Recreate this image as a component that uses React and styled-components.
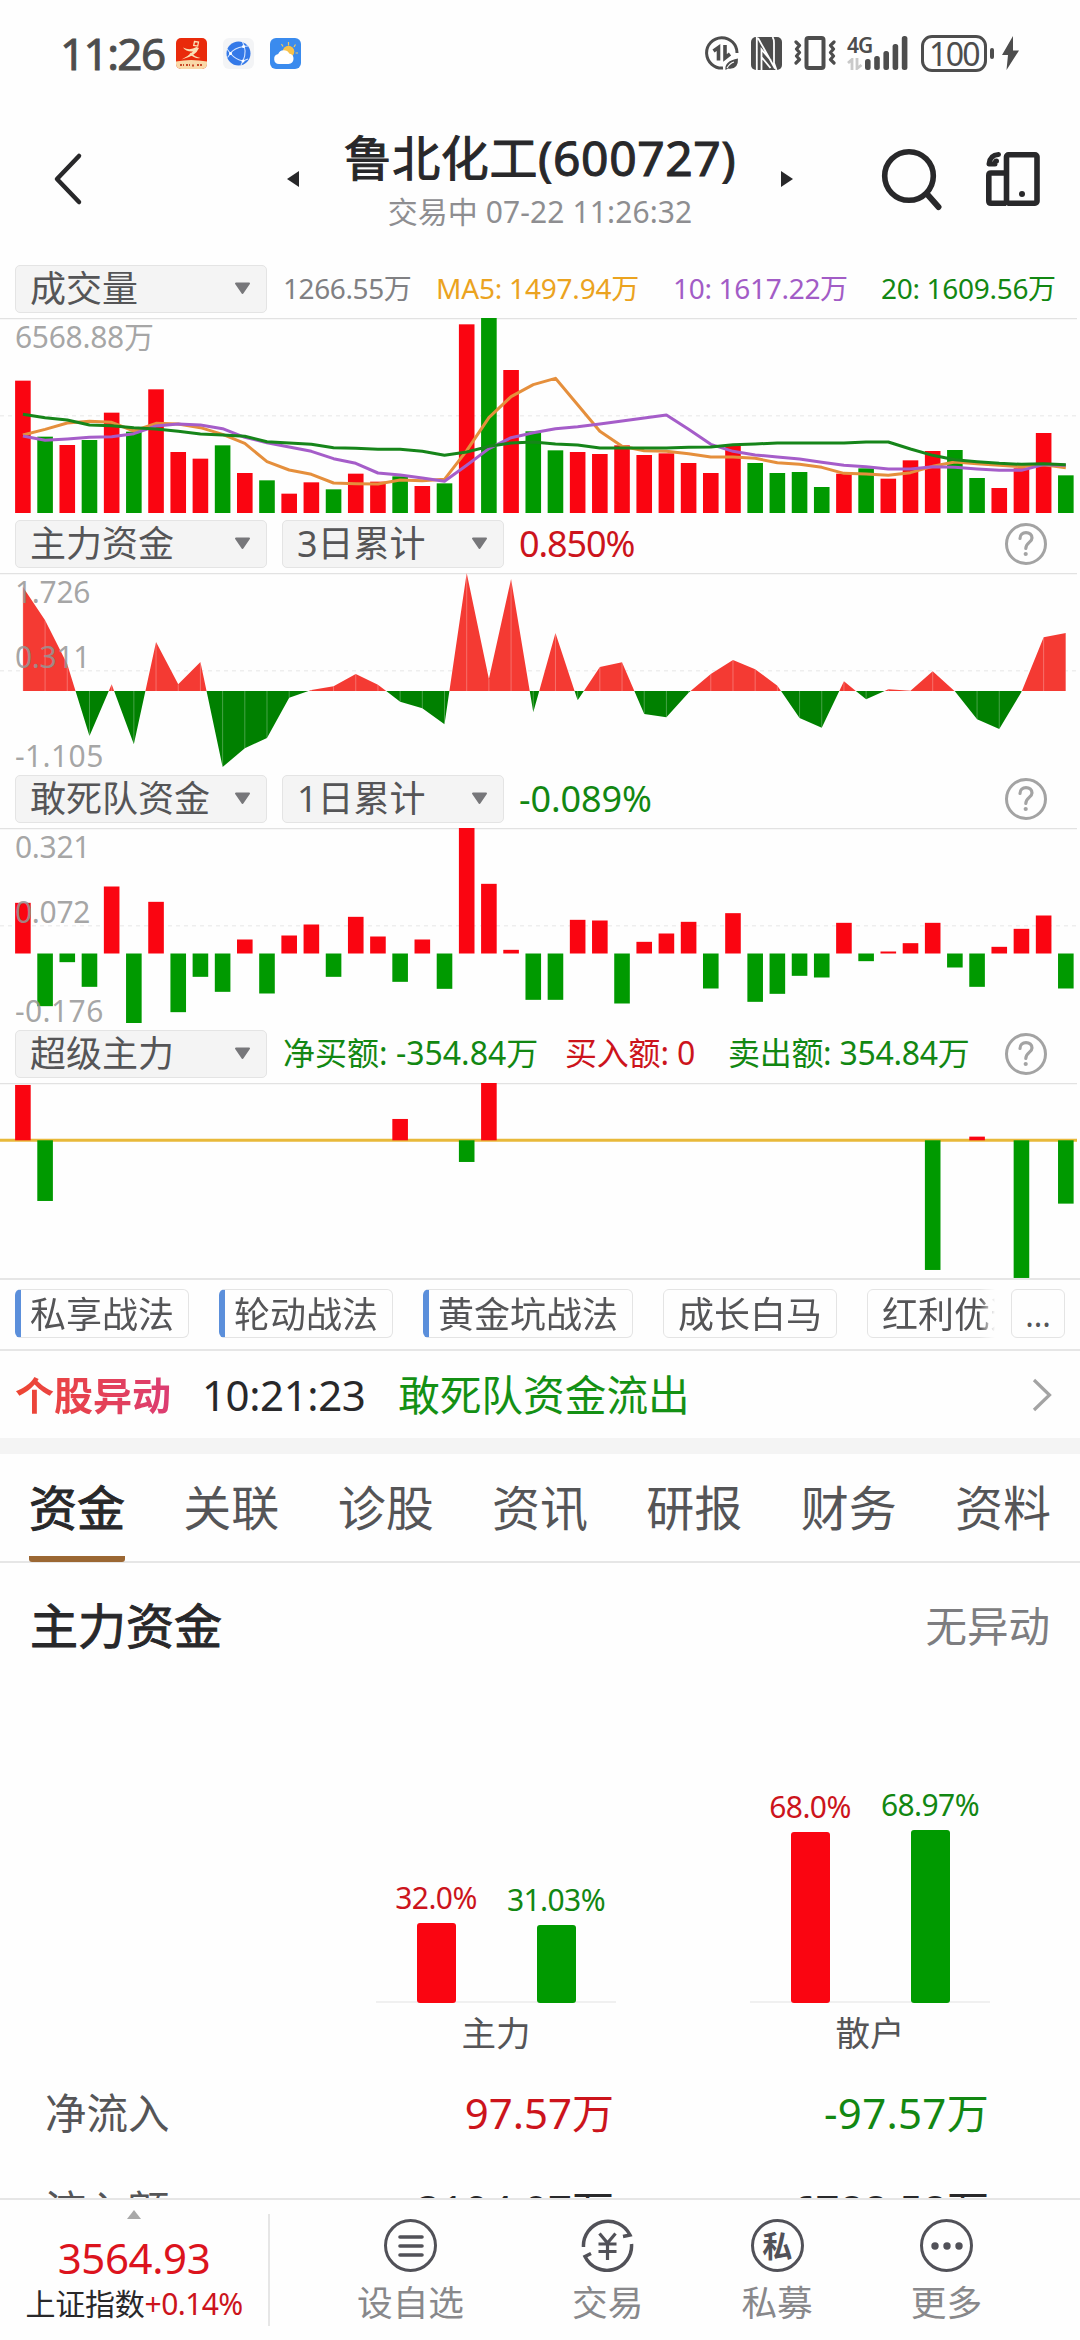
import React from "react";
import styled, { createGlobalStyle, css } from "styled-components";

const RED = "#fa0511";
const GREEN = "#009a00";

const tones = {
    red: "#cc141c",
    green: "#128712",
    orange: "#eba31f",
    purple: "#a25cc6",
    grey: "#808083",
    dark: "#28282a",
    mid: "#555557",
};

const GlobalStyle = createGlobalStyle`
    * {
        box-sizing: border-box;
    }

    body {
        margin: 0;
        background: #fefefe;
        overflow: hidden;
    }

    svg {
        display: block;
        flex: none;
    }
`;

const Screen = styled.div`
    width: 1080px;
    height: 2340px;
    display: flex;
    flex-direction: column;
    overflow: hidden;
    background: #fefefe;
    color: #28282a;
    font-family: "Noto Sans", "Noto Sans CJK SC", sans-serif;
    white-space: nowrap;
`;

const Text = styled.span`
    font-size: ${({ size }) => size}px;
    line-height: ${({ lh, size }) => lh || Math.round(size * 1.3)}px;
    letter-spacing: ${({ ls }) => ls || 0}px;
    color: ${({ tone }) => tones[tone] || tone};
    -webkit-text-stroke: ${({ heavy }) => heavy || 0}px currentColor;
`;

/* ---------- status bar ---------- */

const StatusBar = styled.div`
    height: 106px;
    flex: none;
    display: flex;
    align-items: center;
    padding: 0 61px 0 60px;
`;

const AppIcons = styled.div`
    display: flex;
    gap: 16px;
    margin-left: 12px;
`;

const StatusIcons = styled.div`
    display: flex;
    align-items: center;
    margin-left: auto;
`;

const ModeIcons = styled.div`
    display: flex;
    align-items: center;
    gap: 12px;
`;

const Network = styled.div`
    display: grid;
    grid-template-columns: 18px 43px;
    align-items: end;
    height: 34px;
    margin: 0 13px 0 11px;
`;

const NetworkType = styled.div`
    display: flex;
    flex-direction: column;
    gap: 4px;
    height: 34px;
    font-size: 21px;
    line-height: 18px;
    letter-spacing: -1px;
    font-weight: 600;
    color: #4d4d4d;
`;

const Battery = styled.div`
    width: 66px;
    height: 37px;
    border: 3px solid #4d4d4d;
    border-radius: 11px;
    display: flex;
    align-items: center;
    justify-content: center;
    font-size: 32px;
    line-height: 31px;
    letter-spacing: -1.6px;
    color: #4d4d4d;
`;

const BatteryTip = styled.div`
    width: 4px;
    height: 11px;
    border-radius: 2px;
    background: #4d4d4d;
    margin: 0 8px 0 3px;
`;

/* ---------- title bar ---------- */

const TitleBar = styled.header`
    height: 152px;
    flex: none;
    display: grid;
    grid-template-columns: 287px 506px 1fr;
    align-items: center;
    padding-bottom: 12px;
`;

const BackButton = styled.div`
    padding-left: 52px;
    padding-top: 6px;
`;

const TitleGroup = styled.div`
    display: flex;
    align-items: center;
    justify-content: space-between;
`;

const TitleText = styled.div`
    display: flex;
    flex-direction: column;
    align-items: center;
    margin: 5px 0 -1px;
`;

const Actions = styled.div`
    display: flex;
    align-items: center;
    gap: 43px;
    padding: 6px 0 0 86px;
`;

const Arrow = styled.i`
    width: 0;
    height: 0;
    margin-top: 6px;
    border: 8px solid transparent;
    border-${({ side }) => (side === "left" ? "right" : "left")}: 12px solid #28282a;
    border-${({ side }) => side}: 0;
`;

/* ---------- chart panels ---------- */

const Panel = styled.section`
    height: 255px;
    flex: none;
    display: flex;
    flex-direction: column;
`;

const PanelHead = styled.div`
    height: 60px;
    display: flex;
    align-items: center;
    padding: 1px 0 0 15px;
`;

const Select = styled.div`
    width: ${({ wide }) => (wide ? 252 : 222)}px;
    height: 48px;
    margin-right: 15px;
    padding: 0 15px 0 14px;
    display: flex;
    align-items: center;
    justify-content: space-between;
    border: 1px solid #e4e4e4;
    border-radius: 5px;
    background: #f4f4f4;
    font-size: 36px;
    line-height: 44px;
    color: #555557;
`;

const Legend = styled.div`
    display: grid;
    grid-template-columns: ${({ columns }) => columns};
    margin: -2px 0 0 1px;
`;

const Help = styled.div`
    width: 42px;
    height: 42px;
    margin: 0 33px 0 auto;
    border: 3px solid #a3a3a3;
    border-radius: 50%;
    display: flex;
    align-items: center;
    justify-content: center;
`;

const ChartBox = styled.div`
    position: relative;
    height: 195px;
`;

const AxisLabel = styled.span`
    position: absolute;
    left: 15px;
    top: ${({ top }) => top}px;
    font-size: 30px;
    line-height: 30px;
    letter-spacing: ${({ negative }) => (negative ? 0.4 : -0.3)}px;
    color: rgba(150, 150, 150, 0.85);
`;

/* ---------- strategy tags ---------- */

const TagRow = styled.div`
    width: 1080px;
    height: 73px;
    flex: none;
    display: flex;
    align-items: center;
    gap: 16px;
    padding: 0 15px 2px;
    border-top: 2px solid #e6e6e6;
    border-bottom: 2px solid #e6e6e6;
`;

const TagScroller = styled.div`
    width: 980px;
    display: flex;
    gap: 30px;
    overflow: hidden;
    mask-image: linear-gradient(90deg, #000 965px, transparent 980px);
`;

const Tag = styled.div`
    height: 49px;
    flex: none;
    padding: 0 14px 0 ${({ marked }) => (marked ? 9 : 14)}px;
    border: 1px solid #e4e4e4;
    border-radius: 6px;
    font-size: 36px;
    line-height: 49px;
    color: #555557;
    ${({ marked }) =>
        marked &&
        css`
            border-left: 6px solid #5b8fdb;
        `}
`;

const MoreTag = styled(Tag)`
    width: 54px;
    padding: 0;
    text-align: center;
    font-size: 32px;
`;

const AlertRow = styled.div`
    height: 103px;
    flex: none;
    display: flex;
    align-items: center;
    padding: 0 28px 0 15px;
    border-bottom: 16px solid #f4f4f4;
`;

const AlertLabel = styled.span`
    width: 187px;
    font-size: 39px;
    line-height: 50px;
    font-weight: 700;
    color: transparent;
    background: linear-gradient(90deg, #ee4632, #dc3d73 155px);
    background-clip: text;
    -webkit-background-clip: text;
`;

const AlertTime = styled(Text)`
    width: 196px;
`;

const AlertMessage = styled(Text)`
    flex: 1;
`;

/* ---------- detail tabs ---------- */

const Tabs = styled.nav`
    height: 109px;
    flex: none;
    display: flex;
    justify-content: space-between;
    padding: 0 29px;
    border-bottom: 2px solid #e6e6e6;
`;

const Tab = styled.div`
    height: 108px;
    font-size: 48px;
    line-height: 107px;
    color: ${({ active }) => (active ? "#28282a" : "#555557")};
    -webkit-text-stroke: ${({ active }) => (active ? 1 : 0)}px currentColor;
    border-bottom: 6px solid ${({ active }) => (active ? "#9b6733" : "transparent")};
    border-radius: 3px;
`;

const SectionHead = styled.div`
    height: 126px;
    flex: none;
    display: flex;
    align-items: center;
    justify-content: space-between;
    padding: 0 30px;
`;

const FlowCharts = styled.div`
    height: 374px;
    flex: none;
    display: flex;
    gap: 134px;
    align-items: flex-end;
    padding-left: 376px;
`;

const FlowGroup = styled.div`
    width: 240px;
    display: flex;
    flex-direction: column;
    align-items: center;
`;

const FlowBars = styled.div`
    width: 240px;
    display: flex;
    align-items: flex-end;
    border-bottom: 2px solid #f0f0f0;
`;

const FlowColumn = styled.div`
    width: 120px;
    margin-bottom: -2px;
    display: flex;
    flex-direction: column;
    align-items: center;
`;

const FlowBar = styled.div`
    width: 39px;
    margin-top: 6px;
    border-radius: 3px;
    background: ${({ up }) => (up ? RED : GREEN)};
`;

const FlowTable = styled.div`
    flex: 1;
    min-height: 0;
    overflow: hidden;
    padding-top: 1px;
`;

const FlowRow = styled.div`
    height: 97px;
    display: grid;
    grid-template-columns: 314px 300px 375px;
    align-items: center;
    text-align: right;

    & > :first-child {
        text-align: left;
        padding-left: 45px;
    }
`;

/* ---------- bottom bar ---------- */

const BottomBar = styled.footer`
    height: 142px;
    flex: none;
    display: flex;
    border-top: 2px solid #e6e6e6;
`;

const IndexQuote = styled.div`
    width: 270px;
    height: 112px;
    margin-top: 14px;
    border-right: 2px solid #e6e6e6;
    display: flex;
    flex-direction: column;
    align-items: center;
`;

const Caret = styled.i`
    width: 0;
    height: 0;
    margin-top: -4px;
    border: 7px solid transparent;
    border-top: 0;
    border-bottom: 9px solid #a8a8a8;
`;

const IndexName = styled.div`
    display: flex;
    margin-top: -12px;
`;

const NavItems = styled.div`
    display: flex;
    gap: 98px;
    padding: 19px 0 0 87px;
`;

const NavItem = styled.div`
    display: flex;
    flex-direction: column;
    align-items: center;
    gap: 7px;
    font-size: 35.7px;
    line-height: 46px;
    color: #88888b;

    &:first-child {
        margin-right: 10px;
    }
`;

const NavCircle = styled.div`
    width: 53px;
    height: 53px;
    border: 3.5px solid #515158;
    border-radius: 50%;
    display: flex;
    align-items: center;
    justify-content: center;
    font-size: 30px;
    line-height: 30px;
    font-weight: 600;
    color: #515158;
`;

/* ---------- data, 585 units over the height of a chart ---------- */

const SLOTS = 48;
const UNIT = 195 / 585;
const slotX = (i) => 22.9 + i * 22.19;

// negative volume = falling day
const volume = [
    397, -229, 204, -219, 301, -244, 371, 183, 163, -203, 120, -98, 58, 92, -71, 118, 94, -110, 81, -89, 566, -585,
    429, -245, -188, 183, 177, 203, 174, 179, 150, 120, 207, -150, -120, -123, -78, 118, -134, 103, 158, 186, -189,
    -105, 75, 134, 240, -113,
];

const averages = [
    {
        color: "#e58f3c",
        points: [
            351, 334, 315, 310, 313, 339, 316, 318, 329, 349, 376, 431, 456, 469, 495, 497, 498, 486, 488, 484, 398,
            299, 236, 200, 181, 260, 340, 385, 398, 400, 407, 417, 417, 421, 434, 439, 448, 466, 468, 472, 464, 445,
            432, 437, 442, 446, 440, 449,
        ],
    },
    {
        color: "#a55dc9",
        points: [
            354, 367, 363, 358, 356, 347, 324, 318, 321, 332, 358, 374, 387, 400, 422, 436, 465, 471, 480, 490, 442,
            392, 359, 344, 332, 326, 318, 309, 300, 291, 334, 379, 400, 411, 417, 423, 433, 442, 446, 453, 453, 446,
            448, 453, 457, 457, 440, 442,
        ],
    },
    {
        color: "#16851a",
        points: [
            289, 299, 306, 321, 323, 329, 333, 340, 348, 351, 355, 371, 375, 379, 389, 391, 394, 394, 400, 412, 402,
            385, 375, 372, 378, 381, 390, 390, 390, 390, 388, 387, 380, 378, 375, 375, 375, 375, 372, 372, 393, 412,
            425, 431, 436, 439, 437, 440,
        ],
    },
];

const mainFlow = [
    312, 212, 80, -135, 20, -160, 147, 20, 87, -228, -172, -141, -20, 3, 14, 51, 19, -32, -52, -100, 354, 36, 336,
    -64, 174, -28, 72, 86, -69, -79, -5, 51, 93, 65, 16, -81, -110, 29, -25, 5, 1, 59, -1, -85, -114, -3, 161, 174,
];

const squadFlow = [
    152, -158, -26, -100, 201, -209, 155, -176, -70, -115, 42, -120, 54, 87, -70, 110, 51, -85, 42, -106, 377, 209,
    11, -139, -139, 101, 99, -150, 35, 60, 95, -105, 121, -145, -121, -67, -72, 92, -23, 6, 31, 92, -42, -100, 20,
    74, 114, -105,
];

const superFlow = Array(SLOTS).fill(0);
Object.entries({ 0: 166, 1: -182, 17: 64, 20: -65, 21: 172, 41: -389, 43: 11, 45: -413, 47: -190 }).forEach(
    ([i, v]) => {
        superFlow[i] = v;
    }
);

const Frame = ({ children, dashed = true }) => (
    <svg width="1080" height="195" viewBox="0 0 1080 195">
        <path d="M0 .5H1077" stroke="#e2e2e2" strokeWidth="1.4" />
        {dashed && <path d="M0 97.7H1077" stroke="#eee" strokeWidth="1.6" strokeDasharray="4 4" />}
        {children}
    </svg>
);

const Bars = ({ values, zero, stacked }) =>
    values.map((v, i) => {
        if (!v) return null;
        const h = Math.abs(v) * UNIT;
        const y = stacked || v > 0 ? zero - h : zero;
        return <rect key={i} x={slotX(i) - 7.8} y={y} width="15.6" height={h} fill={v > 0 ? RED : GREEN} />;
    });

const VolumeChart = () => (
    <Frame>
        <Bars values={volume} zero={195} stacked />
        {averages.map(({ color, points }) => (
            <polyline
                key={color}
                points={points.map((p, i) => `${slotX(i)},${p * UNIT}`).join(" ")}
                fill="none"
                stroke={color}
                strokeWidth="3"
                strokeLinejoin="round"
            />
        ))}
    </Frame>
);

const AreaChart = () => {
    const zero = 118;
    const line = mainFlow.map((v, i) => `${slotX(i)},${zero - v * UNIT}`).join(" ");
    const area = `${slotX(0)},${zero} ${line} ${slotX(SLOTS - 1)},${zero}`;
    return (
        <Frame>
            <clipPath id="above">
                <rect width="1080" height={zero} />
            </clipPath>
            <clipPath id="below">
                <rect y={zero} width="1080" height="80" />
            </clipPath>
            <polygon points={area} fill="#f43a33" clipPath="url(#above)" />
            <polygon points={area} fill="#008000" clipPath="url(#below)" />
            {mainFlow.map((v, i) => (
                <path
                    key={i}
                    d={`M${slotX(i)} ${zero}v${-v * UNIT}`}
                    stroke="#fff"
                    strokeOpacity=".35"
                    strokeWidth=".8"
                />
            ))}
        </Frame>
    );
};

const SquadChart = () => (
    <Frame>
        <Bars values={squadFlow} zero={125.5} />
    </Frame>
);

const SuperChart = () => (
    <Frame dashed={false}>
        <path d="M0 57.3H1077" stroke="#e8b93a" strokeWidth="3" />
        <Bars values={superFlow} zero={57.3} />
    </Frame>
);

/* ---------- icons ---------- */

const DropIcon = () => (
    <svg width="17" height="13" viewBox="0 0 17 13">
        <path d="M2 1.5h13L8.5 11z" fill="#77777a" stroke="#77777a" strokeWidth="2" strokeLinejoin="round" />
    </svg>
);

const HelpIcon = () => (
    <Help>
        <svg width="20" height="28" viewBox="0 0 20 28">
            <path
                d="M4 8.5C4 4.6 6.6 2.6 10 2.6s6 2.1 6 5.4c0 4.4-6.2 4.6-6.2 10.5"
                fill="none"
                stroke="#a3a3a3"
                strokeWidth="3.2"
                strokeLinecap="round"
            />
            <circle cx="9.7" cy="24" r="2.1" fill="#a3a3a3" />
        </svg>
    </Help>
);

const BrokerIcon = () => (
    <svg width="31" height="31" viewBox="0 0 31 31">
        <rect width="31" height="31" rx="5" fill="#e92a0b" />
        <path d="M0 23.5Q15 20.5 31 23.5V26a5 5 0 0 1-5 5H5a5 5 0 0 1-5-5z" fill="#f9d9a8" />
        <path d="M7 9.500Q14 13 20.500 9L23 10Q20 18 5.500 21.500 13 17.500 17 13.500 10 14 7 9.500z" fill="#fae0b5" />
        <path d="M15 14.500q4 4.500 9.500 5.500-6 1-11-4z" fill="#fae0b5" />
        <path d="M18.5 3.500l4 .6-.8 4-4-.6z" fill="none" stroke="#fae0b5" strokeWidth="1.3" />
        <path d="M4 27h4M10 27h4M16 27.5h3M21 27h5" stroke="#c94a2a" strokeWidth="2" strokeDasharray="2 1" />
    </svg>
);

const GlobeIcon = () => (
    <svg width="31" height="31" viewBox="0 0 31 31">
        <rect width="31" height="31" rx="6" fill="#f3f4f6" />
        <circle cx="15.5" cy="15.5" r="12" fill="#3479e8" />
        <path
            d="M7.5 15.5Q11 10 20.500 8.500M7.5 15.5q5 6 12.500 7.500M19.5 4q5 9 .5 19l-2 4M7.5 15.5L4 11M20 23l5-2M7.5 15.5l-3 4M20.500 8.500l4.500-.5"
            fill="none"
            stroke="#d6e6ff"
            strokeWidth="1.1"
        />
        <circle cx="7.5" cy="15.5" r="1.5" fill="#fff" />
        <circle cx="20.5" cy="8.5" r="1.5" fill="#fff" />
        <circle cx="20" cy="23" r="1.5" fill="#fff" />
    </svg>
);

const WeatherIcon = () => (
    <svg width="31" height="31" viewBox="0 0 31 31">
        <rect width="31" height="31" rx="6" fill="#3a8bee" />
        <path
            d="M18.5 4v3.500M11.5 6l1.500 2.500M25.5 6.500L24 9M28 15h-2.500"
            stroke="#f4c95a"
            strokeWidth="1.2"
        />
        <circle cx="18.5" cy="13.5" r="5.8" fill="#f8c24a" />
        <path d="M9 26a5 5 0 0 1-.8-9.900 6 6 0 0 1 11-.6A5.300 5.300 0 0 1 18.500 26z" fill="#fff" />
    </svg>
);

const DataSaverIcon = () => (
    <svg width="34" height="34" viewBox="0 0 34 34">
        <path d="M32 17A15.2 15.2 0 1 0 18 32" fill="none" stroke="#4d4d4d" strokeWidth="3" />
        <path d="M8.500 15l5-3.500V24.500M20 9v13l5-4" fill="none" stroke="#4d4d4d" strokeWidth="3.600" />
        <path d="M20.5 34q-1.500-9 12.500-11.500Q33.500 34 23 32.500z" fill="#4d4d4d" />
        <path d="M22 32q3-5 7-6" fill="none" stroke="#fefefe" strokeWidth="1.2" />
    </svg>
);

const NfcIcon = () => (
    <svg width="31" height="33" viewBox="0 0 31 33">
        <rect width="31" height="33" rx="5" fill="#4d4d4d" />
        <path d="M5.800 0V33M7 1L24 31.500M10.500 33V12.500L20 23.500M10.500 20l9 11M21.500 0q1.500 2 1.500 6v20l2.500 7" fill="none" stroke="#fefefe" strokeWidth="1.800" />
    </svg>
);

const VibrateIcon = () => (
    <svg width="42" height="34" viewBox="0 0 42 34">
        <rect x="12.5" y="2" width="17" height="30" rx="2" fill="none" stroke="#4d4d4d" strokeWidth="4" />
        <path
            d="M2 6l3.500 3.500L2.500 13l3 3.500-3 3.500 3 3.500L2 27M40 6l-3.500 3.500 3 3.500-3 3.500 3 3.500-3 3.500L40 27"
            fill="none"
            stroke="#4d4d4d"
            strokeWidth="3.2"
            strokeLinejoin="round"
            strokeLinecap="round"
        />
    </svg>
);

const TrafficIcon = () => (
    <svg width="16" height="12" viewBox="0 0 16 12">
        <path d="M1 5l4-3.500V12M10 0v10.500L14.500 7" fill="none" stroke="#c9c9c9" strokeWidth="2.8" />
    </svg>
);

const SignalIcon = () => (
    <svg width="43" height="34" viewBox="0 0 43 34">
        {[11, 14, 19, 26, 34].map((h, i) => (
            <rect key={h} x={i * 9.2} y={34 - h} width="5.6" height={h} rx="2.5" fill="#4d4d4d" />
        ))}
    </svg>
);

const BoltIcon = () => (
    <svg width="17" height="34" viewBox="0 0 17 34">
        <path d="M11 0L0 19h6L4.5 34 17 14.500h-6z" fill="#4d4d4d" />
    </svg>
);

const BackIcon = () => (
    <svg width="32" height="54" viewBox="0 0 32 54">
        <path
            d="M27 4L5 27l22 23"
            fill="none"
            stroke="#28282a"
            strokeWidth="4.5"
            strokeLinecap="round"
            strokeLinejoin="round"
        />
    </svg>
);

const SearchIcon = () => (
    <svg width="64" height="64" viewBox="0 0 64 64">
        <circle cx="30" cy="29" r="24.3" fill="none" stroke="#28282a" strokeWidth="5.6" />
        <path d="M48 47l11.500 13" stroke="#28282a" strokeWidth="6" strokeLinecap="round" />
    </svg>
);

const DeviceIcon = () => (
    <svg width="54" height="54" viewBox="0 0 54 54">
        <rect x="20.5" y="2.8" width="30.5" height="48.4" rx="2" fill="none" stroke="#28282a" strokeWidth="5.6" />
        <path d="M20 21H5q-2.2 0-2.2 2.200V49q0 2.200 2.200 2.200h15" fill="none" stroke="#28282a" strokeWidth="5.6" />
        <circle cx="36" cy="42" r="3" fill="#28282a" />
        <path
            d="M12.500 2.500Q4 3 3 12h6q0-3 1.500-3"
            fill="none"
            stroke="#28282a"
            strokeWidth="5"
            strokeLinecap="round"
            strokeLinejoin="round"
        />
    </svg>
);

const ChevronIcon = () => (
    <svg width="20" height="34" viewBox="0 0 20 34">
        <path d="M2 2l15.500 15L2 32" fill="none" stroke="#a3a3a3" strokeWidth="3.2" />
    </svg>
);

const ListIcon = () => (
    <svg width="26" height="22" viewBox="0 0 26 22">
        <path d="M2 2h22M2 11h22M2 20h22" stroke="#515158" strokeWidth="3.6" strokeLinecap="round" />
    </svg>
);

const TradeIcon = () => (
    <svg width="53" height="53" viewBox="0 0 53 53">
        <g fill="none" stroke="#515158" strokeWidth="3.5">
            <path d="M2.500 28A24.500 24.500 0 0 1 49 16l-7 1.500" />
            <path d="M50.500 25A24.500 24.500 0 0 1 4 37.500l6-3" />
            <path d="M18.500 14.500l8 9.500 8-9.500M26.500 24v17M17.500 25h18M17.500 32.500h18" strokeWidth="3.2" />
        </g>
    </svg>
);

const DotsIcon = () => (
    <svg width="32" height="8" viewBox="0 0 32 8">
        <g fill="#515158">
            <circle cx="4" cy="4" r="3.7" />
            <circle cx="16" cy="4" r="3.7" />
            <circle cx="28" cy="4" r="3.7" />
        </g>
    </svg>
);

/* ---------- content ---------- */

const tags = [
    { label: "私享战法", marked: true },
    { label: "轮动战法", marked: true },
    { label: "黄金坑战法", marked: true },
    { label: "成长白马" },
    { label: "红利优选" },
];

const tabs = ["资金", "关联", "诊股", "资讯", "研报", "财务", "资料"];

const flowGroups = [
    { name: "主力", bars: [["32.0%", 80.5], ["31.03%", 78]] },
    { name: "散户", bars: [["68.0%", 171], ["68.97%", 173.5]] },
];

const Dropdown = ({ children, wide }) => (
    <Select wide={wide}>
        <span>{children}</span>
        <DropIcon />
    </Select>
);

const AxisLabels = ({ values }) =>
    values.map((v, i) => (
        <AxisLabel key={v} top={[4, 69, 168][i]} negative={v[0] === "-"}>
            {v}
        </AxisLabel>
    ));

const App = () => {
    return (
        <>
            <GlobalStyle />
            <Screen>
                <StatusBar>
                    <Text size={44} ls={-1.6} heavy={0.9} tone="#4d4d4d">11:26</Text>
                    <AppIcons>
                        <BrokerIcon />
                        <GlobeIcon />
                        <WeatherIcon />
                    </AppIcons>
                    <StatusIcons>
                        <ModeIcons>
                            <DataSaverIcon />
                            <NfcIcon />
                            <VibrateIcon />
                        </ModeIcons>
                        <Network>
                            <NetworkType>
                                4G
                                <TrafficIcon />
                            </NetworkType>
                            <SignalIcon />
                        </Network>
                        <Battery>100</Battery>
                        <BatteryTip />
                        <BoltIcon />
                    </StatusIcons>
                </StatusBar>

                <TitleBar>
                    <BackButton>
                        <BackIcon />
                    </BackButton>
                    <TitleGroup>
                        <Arrow side="left" />
                        <TitleText>
                            <Text size={48} lh={65} ls={0.6} heavy={1} tone="dark">鲁北化工(600727)</Text>
                            <Text size={30} lh={44} ls={0.1} tone="#8e8e91">交易中 07-22 11:26:32</Text>
                        </TitleText>
                        <Arrow side="right" />
                    </TitleGroup>
                    <Actions>
                        <SearchIcon />
                        <DeviceIcon />
                    </Actions>
                </TitleBar>

                <Panel>
                    <PanelHead>
                        <Dropdown wide>成交量</Dropdown>
                        <Legend columns="153px 237px 208px auto">
                            <Text size={28} ls={-0.4} tone="grey">1266.55万</Text>
                            <Text size={28} ls={-0.2} tone="orange">MA5: 1497.94万</Text>
                            <Text size={28} ls={-0.3} tone="purple">10: 1617.22万</Text>
                            <Text size={28} ls={-0.3} tone="green">20: 1609.56万</Text>
                        </Legend>
                    </PanelHead>
                    <ChartBox>
                        <VolumeChart />
                        <AxisLabels values={["6568.88万"]} />
                    </ChartBox>
                </Panel>

                <Panel>
                    <PanelHead>
                        <Dropdown wide>主力资金</Dropdown>
                        <Dropdown>3日累计</Dropdown>
                        <Text size={36} ls={-1.1} tone="red">0.850%</Text>
                        <HelpIcon />
                    </PanelHead>
                    <ChartBox>
                        <AreaChart />
                        <AxisLabels values={["1.726", "0.311", "-1.105"]} />
                    </ChartBox>
                </Panel>

                <Panel>
                    <PanelHead>
                        <Dropdown wide>敢死队资金</Dropdown>
                        <Dropdown>1日累计</Dropdown>
                        <Text size={36} ls={-0.1} tone="green">-0.089%</Text>
                        <HelpIcon />
                    </PanelHead>
                    <ChartBox>
                        <SquadChart />
                        <AxisLabels values={["0.321", "0.072", "-0.176"]} />
                    </ChartBox>
                </Panel>

                <Panel>
                    <PanelHead>
                        <Dropdown wide>超级主力</Dropdown>
                        <Legend columns="282px 163px auto">
                            <Text size={32} tone="green">净买额: -354.84万</Text>
                            <Text size={32} ls={-0.2} tone="red">买入额: 0</Text>
                            <Text size={32} ls={-0.3} tone="green">卖出额: 354.84万</Text>
                        </Legend>
                        <HelpIcon />
                    </PanelHead>
                    <ChartBox>
                        <SuperChart />
                    </ChartBox>
                </Panel>

                <TagRow>
                    <TagScroller>
                        {tags.map(({ label, marked }) => (
                            <Tag key={label} marked={marked}>{label}</Tag>
                        ))}
                    </TagScroller>
                    <MoreTag>...</MoreTag>
                </TagRow>

                <AlertRow>
                    <AlertLabel>个股异动</AlertLabel>
                    <AlertTime size={42} ls={-0.4} tone="dark">10:21:23</AlertTime>
                    <AlertMessage size={41.7} tone="#149014">敢死队资金流出</AlertMessage>
                    <ChevronIcon />
                </AlertRow>

                <Tabs>
                    {tabs.map((t, i) => (
                        <Tab key={t} active={i === 0}>{t}</Tab>
                    ))}
                </Tabs>

                <SectionHead>
                    <Text size={48} heavy={1} tone="dark">主力资金</Text>
                    <Text size={41.5} tone="#7d7d80">无异动</Text>
                </SectionHead>

                <FlowCharts>
                    {flowGroups.map(({ name, bars }) => (
                        <FlowGroup key={name}>
                            <FlowBars>
                                {bars.map(([label, h], i) => (
                                    <FlowColumn key={label}>
                                        <Text size={30} ls={-0.6} tone={i ? "green" : "red"}>{label}</Text>
                                        <FlowBar up={i === 0} style={{ height: h }} />
                                    </FlowColumn>
                                ))}
                            </FlowBars>
                            <Text size={34.5} lh={60} tone="mid">{name}</Text>
                        </FlowGroup>
                    ))}
                </FlowCharts>

                <FlowTable>
                    <FlowRow>
                        <Text size={41.5} tone="mid">净流入</Text>
                        <Text size={42} tone="red">97.57万</Text>
                        <Text size={42} ls={0.3} tone="green">-97.57万</Text>
                    </FlowRow>
                    <FlowRow>
                        <Text size={41.5} tone="mid">流入额</Text>
                        <Text size={42} tone="dark">3194.07万</Text>
                        <Text size={42} tone="dark">6788.58万</Text>
                    </FlowRow>
                </FlowTable>

                <BottomBar>
                    <IndexQuote>
                        <Caret />
                        <Text size={42} lh={77} ls={-0.4} tone="#dc131d">3564.93</Text>
                        <IndexName>
                            <Text size={30} lh={40} ls={-0.2} tone="dark">上证指数</Text>
                            <Text size={30} lh={40} ls={-0.6} tone="red">+0.14%</Text>
                        </IndexName>
                    </IndexQuote>
                    <NavItems>
                        <NavItem>
                            <NavCircle><ListIcon /></NavCircle>
                            设自选
                        </NavItem>
                        <NavItem>
                            <TradeIcon />
                            交易
                        </NavItem>
                        <NavItem>
                            <NavCircle>私</NavCircle>
                            私募
                        </NavItem>
                        <NavItem>
                            <NavCircle><DotsIcon /></NavCircle>
                            更多
                        </NavItem>
                    </NavItems>
                </BottomBar>
            </Screen>
        </>
    );
};

export default App;
